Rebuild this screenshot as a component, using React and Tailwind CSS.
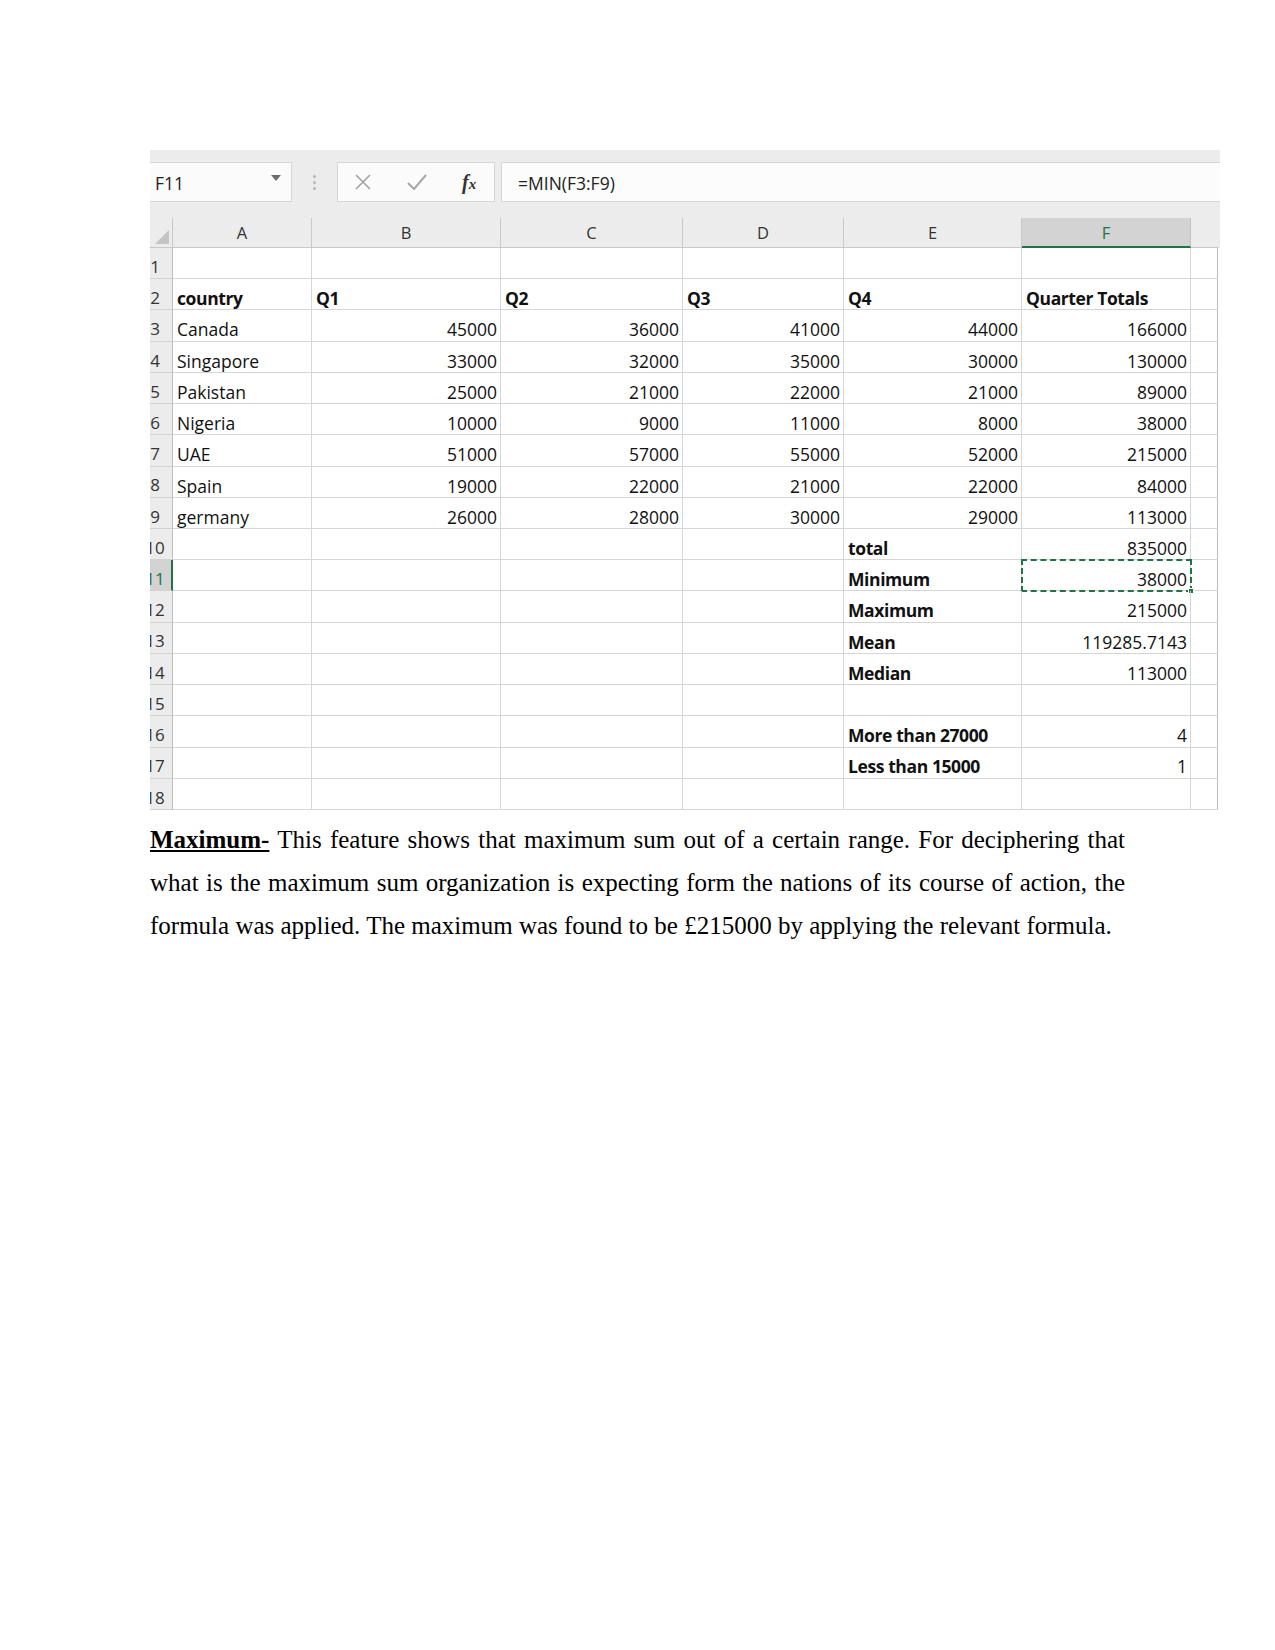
import React from 'react'

const cols = [
  { key: 'A', w: 'w-[139px]' },
  { key: 'B', w: 'w-[189px]' },
  { key: 'C', w: 'w-[182px]' },
  { key: 'D', w: 'w-[161px]' },
  { key: 'E', w: 'w-[178px]' },
  { key: 'F', w: 'w-[169px]' },
]

// each row: [A, B, C, D, E, F], strings are left aligned text, numbers right aligned
const rows = [
  [],
  [{ t: 'country', b: 1 }, { t: 'Q1', b: 1 }, { t: 'Q2', b: 1 }, { t: 'Q3', b: 1 }, { t: 'Q4', b: 1 }, { t: 'Quarter Totals', b: 1 }],
  ['Canada', 45000, 36000, 41000, 44000, 166000],
  ['Singapore', 33000, 32000, 35000, 30000, 130000],
  ['Pakistan', 25000, 21000, 22000, 21000, 89000],
  ['Nigeria', 10000, 9000, 11000, 8000, 38000],
  ['UAE', 51000, 57000, 55000, 52000, 215000],
  ['Spain', 19000, 22000, 21000, 22000, 84000],
  ['germany', 26000, 28000, 30000, 29000, 113000],
  [null, null, null, null, { t: 'total', b: 1 }, 835000],
  [null, null, null, null, { t: 'Minimum', b: 1 }, 38000],
  [null, null, null, null, { t: 'Maximum', b: 1 }, 215000],
  [null, null, null, null, { t: 'Mean', b: 1 }, '119285.7143#'],
  [null, null, null, null, { t: 'Median', b: 1 }, 113000],
  [],
  [null, null, null, null, { t: 'More than 27000', b: 1 }, 4],
  [null, null, null, null, { t: 'Less than 15000', b: 1 }, 1],
  [],
]

const Cell = ({ v, w, selected }) => {
  let content = null
  let right = false
  let bold = false
  if (typeof v === 'number') {
    content = String(v)
    right = true
  } else if (typeof v === 'string' && v.endsWith('#')) {
    content = v.slice(0, -1)
    right = true
  } else if (typeof v === 'string') {
    content = v
  } else if (v && v.t) {
    content = v.t
    bold = true
  }
  return (
    <div
      className={`relative ${w} h-full shrink-0 border-r border-b border-[#d6d6d6] flex items-center pt-[8px] ${right ? 'justify-end pr-[3px]' : 'pl-[4px]'} ${bold ? 'font-bold tracking-[-0.4px]' : ''}`}
    >
      <span className="whitespace-nowrap">{content}</span>
      {selected && (
        <>
          <div className="absolute -left-px -top-px -right-[2px] -bottom-[2px] border-[2.5px] border-dashed border-[#217346]" />
          <div className="absolute -right-[4px] -bottom-[4px] w-[6px] h-[6px] bg-[#217346] border border-white" />
        </>
      )}
    </div>
  )
}

const App = () => {
  return (
    <div className="min-h-[1650px] bg-white">
      <div className="pt-[150px] pl-[150px]">
        <div className="w-[1070px] text-[17.5px] text-[#111]" style={{ fontFamily: '"Open Sans", "Noto Sans", sans-serif' }}>
          {/* formula bar */}
          <div className="h-[68px] bg-[#ececec] pt-[12px]">
            <div className="flex h-[40px]">
              <div className="w-[142px] bg-[#fbfbfb] border border-l-0 border-[#d5d5d5] flex items-center justify-between pl-[5px] pr-[10px] pt-[2px]">
                <span className="text-[17.5px] text-[#222]">F11</span>
                <svg width="10" height="6" viewBox="0 0 10 6" className="-mt-[10px]">
                  <path d="M0 0 H10 L5 6 Z" fill="#6d6d6d" />
                </svg>
              </div>
              <div className="w-[45px] flex flex-col items-center justify-center gap-[3px]">
                <span className="w-[3px] h-[3px] rounded-full bg-[#b4b4b4]" />
                <span className="w-[3px] h-[3px] rounded-full bg-[#b4b4b4]" />
                <span className="w-[3px] h-[3px] rounded-full bg-[#b4b4b4]" />
              </div>
              <div className="w-[158px] bg-[#fbfbfb] border border-[#d5d5d5] flex items-center pl-[16px]">
                <svg width="18" height="18" viewBox="0 0 18 18">
                  <path d="M2 2 L16 16 M16 2 L2 16" stroke="#a3a3a3" strokeWidth="1.6" />
                </svg>
                <svg width="20" height="18" viewBox="0 0 20 18" className="ml-[35px]">
                  <path d="M1 10 L7 16 L19 2" stroke="#a8a8a8" strokeWidth="2" fill="none" />
                </svg>
                <span className="ml-[35px] italic font-bold text-[20px] text-[#333] leading-none" style={{ fontFamily: '"Liberation Serif", serif' }}>
                  f<span className="text-[15px]">x</span>
                </span>
              </div>
              <div className="w-[6px]" />
              <div className="flex-1 bg-[#fcfcfc] border border-r-0 border-[#d5d5d5] flex items-center pl-[16px] pt-[2px]">
                <span className="text-[17.5px] text-[#222]">=MIN(F3:F9)</span>
              </div>
            </div>
          </div>

          {/* column headers */}
          <div className="flex h-[30px] bg-[#ececec]">
            <div className="relative w-[23px] shrink-0 border-r border-b border-[#c8c8c8] bg-[#ececec]">
              <svg width="14" height="14" viewBox="0 0 14 14" className="absolute right-[3px] bottom-[3px]">
                <path d="M14 0 V14 H0 Z" fill="#c4c4c4" />
              </svg>
            </div>
            {cols.map((c) => (
              <div
                key={c.key}
                className={`${c.w} shrink-0 flex items-center justify-center pt-[2px] text-[16.5px] border-r ${c.key === 'F' ? 'bg-[#d3d3d3] text-[#217346] border-b-2 border-b-[#217346] border-r-[#c0c0c0]' : 'text-[#333] border-b border-[#c8c8c8]'}`}
              >
                {c.key}
              </div>
            ))}
            <div className="w-[27px] shrink-0 border-b border-[#c8c8c8]" />
          </div>

          {/* rows */}
          {rows.map((r, i) => {
            const n = i + 1
            const active = n === 11
            return (
              <div key={n} className="flex h-[31.22px]">
                <div
                  className={`w-[23px] shrink-0 overflow-hidden border-b border-[#d2d2d2] ${active ? 'bg-[#d3d3d3] text-[#217346] border-r-2 border-r-[#217346]' : 'bg-[#ececec] text-[#333] border-r border-r-[#bdbdbd]'}`}
                >
                  <div className="w-[40px] -ml-[15px] h-full flex items-center justify-center pt-[7px] text-[17px]">{n}</div>
                </div>
                {cols.map((c, j) => (
                  <Cell key={c.key} v={r[j]} w={c.w} selected={active && c.key === 'F'} />
                ))}
                <div className="w-[27px] shrink-0 border-r border-b border-[#d6d6d6] border-r-[#bcbcbc]" />
              </div>
            )
          })}
        </div>
      </div>

      <p
        className="w-[975px] ml-[150px] mt-[8px] text-[25px] leading-[43px] text-justify text-black"
        style={{ fontFamily: '"Liberation Serif", "Times New Roman", serif' }}
      >
        <span className="font-bold underline">Maximum-</span> This feature shows that maximum sum out of a certain range. For deciphering that what is the maximum sum organization is expecting form the nations of its course of action, the formula was applied. The maximum was found to be £215000 by applying the relevant formula.
      </p>
    </div>
  )
}

export default App
